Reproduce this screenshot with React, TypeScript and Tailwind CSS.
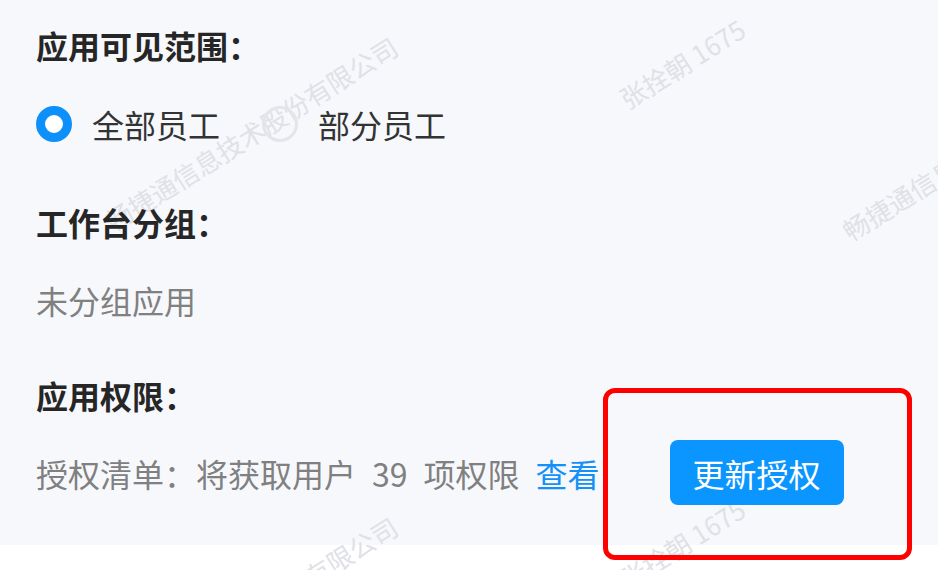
const font = { fontFamily: '"Noto Sans CJK SC", "Noto Sans", sans-serif' };

function Watermark({ text, className }: { text: string; className: string }) {
  return (
    <div
      className={`pointer-events-none absolute origin-left -rotate-[32deg] whitespace-nowrap text-[26px] leading-none text-[#dfe1e7] ${className}`}
    >
      {text}
    </div>
  );
}

export default function App() {
  return (
    <div className="relative h-[570px] w-[938px] overflow-hidden bg-white" style={font}>
      {/* panel */}
      <div className="flex h-[545px] flex-col bg-[#f7f8fc] pl-9 pt-[25px] text-[32px] leading-[40px]">
        <p className="relative z-10 self-start font-bold text-[#262626]">应用可见范围：</p>

        {/* radios */}
        <div className="relative z-10 mt-[39px] flex items-center self-start">
          <div className="flex items-center gap-5">
            <span className="box-border h-9 w-9 rounded-full border-[9px] border-[#0e90fb] bg-white" />
            <span className="text-[#333]">全部员工</span>
          </div>
          <div className="ml-[42px] flex items-center gap-5">
            <span className="box-border h-9 w-9 rounded-full border-[3px] border-[#e3e5ea]" />
            <span className="text-[#333]">部分员工</span>
          </div>
        </div>

        <p className="relative z-10 mt-[58px] self-start font-bold text-[#262626]">工作台分组：</p>
        <p className="relative z-10 mt-[38px] self-start text-[#808080]">未分组应用</p>

        <p className="relative z-10 mt-[55px] self-start font-bold text-[#262626]">应用权限：</p>

        <div className="relative z-10 mt-[25px] flex items-center self-start">
          <p className="text-[#808080]">
            授权清单：将获取用户<span className="ml-4">39</span>
            <span className="ml-4">项权限</span>
            <span className="ml-4 text-[#1490f7]">查看</span>
          </p>
          <button className="ml-[70px] h-[65px] w-[174px] rounded-lg bg-[#0a95ff] text-[32px] text-white">
            更新授权
          </button>
        </div>
      </div>

      {/* watermarks */}
      <Watermark text="畅捷通信息技术股份有限公司" className="left-[108px] top-[210px]" />
      <Watermark text="张拴朝 1675" className="left-[622px] top-[88px]" />
      <Watermark text="畅捷通信息技术股份有限公司" className="left-[845px] top-[220px]" />
      <Watermark text="畅捷通信息技术股份有限公司" className="left-[108px] top-[690px]" />
      <Watermark text="张拴朝 1675" className="left-[622px] top-[568px]" />

      {/* red annotation */}
      <div className="absolute left-[603px] top-[388px] h-[172px] w-[309px] rounded-xl border-[5px] border-[#ff0000]" />
    </div>
  );
}
